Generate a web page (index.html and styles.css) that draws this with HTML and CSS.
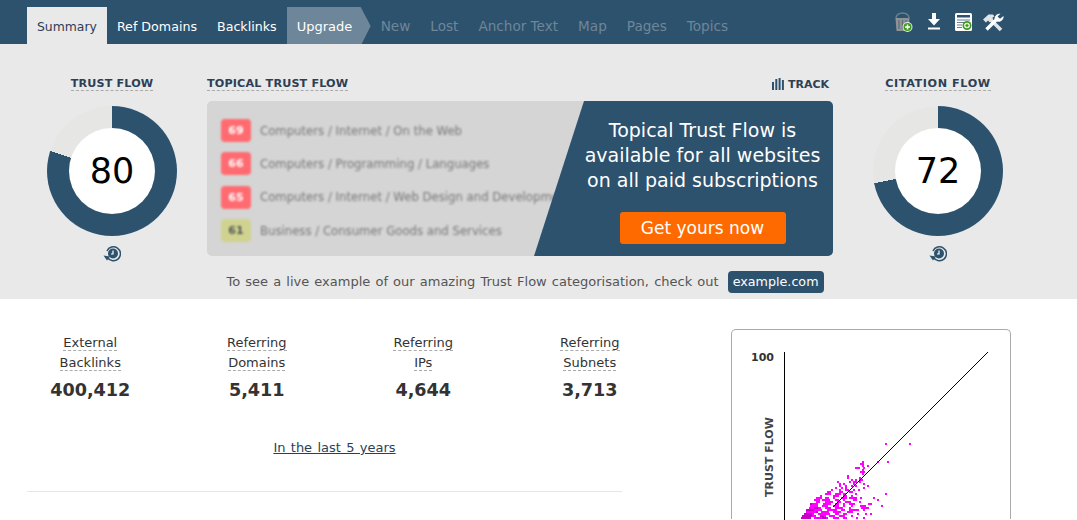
FILE: index.html
```html
<!DOCTYPE html>
<html lang="en">
<head>
    <meta charset="UTF-8">
    <meta name="viewport" content="width=device-width, initial-scale=1.0">
    <title>Site Explorer Summary</title>
    <link rel="stylesheet" href="styles.css">
</head>
<body>
<nav class="topbar">
    <ul class="tabs">
        <li class="tab active">Summary</li>
        <li class="tab">Ref Domains</li>
        <li class="tab">Backlinks</li>
        <li class="tab upgrade">Upgrade</li>
        <li class="tab off">New</li>
        <li class="tab off">Lost</li>
        <li class="tab off">Anchor Text</li>
        <li class="tab off">Map</li>
        <li class="tab off">Pages</li>
        <li class="tab off">Topics</li>
    </ul>
    <div class="tools">
        <!-- bucket -->
        <svg width="19" height="21" viewBox="0 0 19 21">
            <path d="M2 6a6.500 5 0 0 1 13 0" fill="none" stroke="#6f7f8b" stroke-width="1.500"/>
            <path d="M1.500 6h14l-1 13h-12z" fill="#8d9499"/>
            <path d="M5 8v9M8.500 8v9M12 8v9" stroke="#5f6a72" stroke-width="1.200"/>
            <circle cx="13.500" cy="15" r="5" fill="#e8efe6"/>
            <circle cx="13.500" cy="15" r="4" fill="#3f9a1f"/>
            <path d="M13.500 12.500v5M11 15h5" stroke="#fff" stroke-width="1.500"/>
        </svg>
        <!-- download -->
        <svg width="14" height="18" viewBox="0 0 14 18">
            <path d="M5 0h4v6h4l-6 6.500L1 6h4z" fill="#fff"/>
            <path d="M1 15.500h12" stroke="#fff" stroke-width="2"/>
        </svg>
        <!-- report -->
        <svg width="18" height="18" viewBox="0 0 18 18">
            <rect width="17" height="18" rx="1.500" fill="#fff"/>
            <rect x="2" y="2" width="13" height="2.500" fill="#2d526e"/>
            <path d="M2 7h13M2 9.500h7M2 12h5M2 14.500h5" stroke="#6b7f8e" stroke-width="1.200"/>
            <circle cx="12" cy="12.500" r="4.500" fill="#3f9a1f"/>
            <circle cx="12" cy="12.500" r="2.800" fill="#fff"/>
            <path d="M12 10.800v3.400M10.300 12.500h3.400" stroke="#3f9a1f" stroke-width="1.400"/>
        </svg>
        <!-- tools -->
        <svg class="tool-last" width="21" height="19" viewBox="0 0 21 19">
            <path d="M7 6l11 11" stroke="#dfe4e7" stroke-width="3.600" fill="none"/>
            <path d="M0 6.500 5.500 1.500h4.500l1.500 2-2 1 .5 2-3 3-2-2-2 2z" fill="#dfe4e7"/>
            <path d="M15 5L3.500 16.500" stroke="#fff" stroke-width="3.400" fill="none"/>
            <path d="M20.500 3a5 5 0 0 1-6.500 5.500L11.500 6A5 5 0 0 1 17.500.8l-3 2.700 2.500 2.300z" fill="#fff"/>
        </svg>
    </div>
</nav>

<section class="band">
    <div class="gauge-col">
        <h2 class="heading"><span class="dashed">TRUST FLOW</span></h2>
        <div class="gauge g80"><div class="gauge-hole">80</div></div>
        <svg class="history" width="18" height="18" viewBox="0 0 18 18">
            <path d="M3.500 12.500A7 7 0 1 0 3 6" fill="none" stroke="#2d526e" stroke-width="1.500" transform="translate(1 0)"/>
            <path d="M.5 10.500l3.500 5 3-4z" fill="#2d526e"/>
            <circle cx="10" cy="8.500" r="5" fill="#2d526e"/>
            <path d="M10 5.500v3.500h-2" fill="none" stroke="#fff" stroke-width="1.200"/>
        </svg>
    </div>

    <div class="topical">
        <div class="topical-head">
            <h2 class="heading"><span class="dashed">TOPICAL TRUST FLOW</span></h2>
            <a class="track">
                <svg width="12" height="12" viewBox="0 0 12 12">
                    <path d="M0 4h2v8H0zM3.300 1h2v11h-2zM6.600 0h2v12h-2zM9.900 2h2v10h-2z" fill="#2d526e"/>
                </svg>
                TRACK
            </a>
        </div>
        <div class="panel">
            <ul class="topics">
                <li class="topic"><b class="score red">69</b><span class="topic-name">Computers / Internet / On the Web</span></li>
                <li class="topic"><b class="score red">66</b><span class="topic-name">Computers / Programming / Languages</span></li>
                <li class="topic"><b class="score red">65</b><span class="topic-name">Computers / Internet / Web Design and Development</span></li>
                <li class="topic"><b class="score olive">61</b><span class="topic-name">Business / Consumer Goods and Services</span></li>
            </ul>
            <div class="promo">
                <p class="promo-text">Topical Trust Flow is<br>available for all websites<br>on all paid subscriptions</p>
                <a class="promo-btn">Get yours now</a>
            </div>
        </div>
        <p class="note">To see a live example of our amazing Trust Flow categorisation, check out <a class="example">example.com</a></p>
    </div>

    <div class="gauge-col">
        <h2 class="heading wide"><span class="dashed">CITATION FLOW</span></h2>
        <div class="gauge g72"><div class="gauge-hole">72</div></div>
        <svg class="history" width="18" height="18" viewBox="0 0 18 18">
            <path d="M3.500 12.500A7 7 0 1 0 3 6" fill="none" stroke="#2d526e" stroke-width="1.500" transform="translate(1 0)"/>
            <path d="M.5 10.500l3.500 5 3-4z" fill="#2d526e"/>
            <circle cx="10" cy="8.500" r="5" fill="#2d526e"/>
            <path d="M10 5.500v3.500h-2" fill="none" stroke="#fff" stroke-width="1.200"/>
        </svg>
    </div>
</section>

<main class="lower">
    <div class="counts">
        <div class="stats">
            <div class="stat">
                <div class="stat-label"><span class="dashed">External</span><br><span class="dashed">Backlinks</span></div>
                <div class="stat-value">400,412</div>
            </div>
            <div class="stat">
                <div class="stat-label"><span class="dashed">Referring</span><br><span class="dashed">Domains</span></div>
                <div class="stat-value">5,411</div>
            </div>
            <div class="stat">
                <div class="stat-label"><span class="dashed">Referring</span><br><span class="dashed">IPs</span></div>
                <div class="stat-value">4,644</div>
            </div>
            <div class="stat">
                <div class="stat-label"><span class="dashed">Referring</span><br><span class="dashed">Subnets</span></div>
                <div class="stat-value">3,713</div>
            </div>
        </div>
        <p class="period"><a href="#">In the last 5 years</a></p>
        <hr class="rule">
    </div>

    <div class="chart-card">
        <svg class="chart" width="278" height="190" viewBox="732 330 278 190">
            <text class="chart-num" x="751" y="361">100</text>
            <text class="chart-axis" transform="translate(773 497) rotate(-90)">TRUST FLOW</text>
            <path d="M784.500 352V520" stroke="#000" stroke-width="1" shape-rendering="crispEdges"/>
            <path class="dots" d="M885 444h2M909 444h2
                M877 462h2M887 462h2M862 462h2
                M860 464h4
                M862 466h2M867 466h2
                M855 468h5M863 468h2
                M862 470h2
                M860 472h5
                M862 474h2
                M847 476h2
                M847 478h2M859 478h2
                M851 480h2M855 480h2M859 480h4
                M849 482h2M853 482h4M859 482h2M837 482h2
                M839 484h2M843 484h2M853 484h2M863 484h2
                M867 486h2M839 486h2M845 486h2M851 486h2M855 486h2
                M835 488h2M841 488h2M845 488h2M863 488h2
                M831 490h2M839 490h2M845 490h4M853 490h2M858 490h2
                M827 492h4M839 492h4M849 492h4
                M825 494h6M835 494h6M843 494h3M855 494h2M885 494h2
                M820 496h2M833 496h6M843 496h4M851 496h2
                M816 498h6M825 498h4M833 498h2M841 498h6M849 498h8M860 498h2M873 498h2
                M814 500h6M822 500h8M835 500h4M843 500h2M853 500h4M877 500h2
                M816 502h4M825 502h8M837 502h4M845 502h6M859 502h2
                M812 504h6M823 504h8M835 504h4M843 504h2M849 504h6M868 504h4
                M810 506h8M822 506h6M833 506h6M843 506h2M851 506h2M860 506h6M881 506h2
                M809 508h12M825 508h6M835 508h8M849 508h2M861 508h8
                M808 510h14M827 510h10M841 510h4M849 510h10M863 510h2
                M806 512h12M821 512h8M833 512h8M847 512h6
                M804 514h10M818 514h12M835 514h4M843 514h4M857 514h2M865 514h2M870 514h2
                M802 516h14M820 516h6M829 516h6M839 516h6M851 516h2
                M801 518h10M814 518h14M833 518h6M843 518h4M856 518h2M863 518h2"/>
            <path class="dots-dense" d="M810 504h2M806 510h8M804 514h8M802 516h10M801 518h10M814 508h4M816 512h2M820 516h4M822 518h4"/>
            <path d="M988 352L833 507" stroke="#000" stroke-width="1" fill="none"/>
        </svg>
    </div>
</main>
</body>
</html>
```

FILE: styles.css
```css
html, body {
    margin: 0;
    height: 520px;
    overflow: hidden;
}

body {
    font-family: "DejaVu Sans", Verdana, sans-serif;
    font-size: 13px;
    color: #333;
    background-color: #fff;
}

ul {
    list-style: none;
    margin: 0;
    padding: 0;
}

p {
    margin: 0;
}

/* top navigation */
.topbar {
    display: flex;
    justify-content: space-between;
    height: 44px;
    padding-left: 27px;
    background-color: #2d526e;
}

.tabs {
    display: flex;
    align-items: flex-end;
}

.tab {
    height: 37px;
    line-height: 39px;
    padding: 0 10px;
    font-size: 12.650px;
    color: #fff;
    box-sizing: border-box;
}

.tab.active {
    font-size: 12.400px;
    color: #2d3f55;
    background-color: #e9e9e9;
}

.tab.upgrade {
    width: 84px;
    font-size: 13px;
    background-color: #6d8699;
    clip-path: polygon(0 0, 74px 0, 84px 19px, 75px 100%, 0 100%);
}

.tab.off {
    font-size: 13.600px;
    color: #6f8699;
}

.tools {
    display: flex;
    align-items: center;
    gap: 14px;
    margin-right: 73px;
}

.tool-last {
    margin-left: -4px;
}

/* grey band with the flow gauges */
.band {
    display: grid;
    grid-template-columns: 170px 626px 190px;
    column-gap: 10px;
    height: 255px;
    padding-left: 27px;
    background-color: #e9e9e9;
}

.heading {
    margin: 0;
    font-size: 11.200px;
    font-weight: bold;
    line-height: 16px;
    letter-spacing: .15px;
    color: #2d3f55;
}

.heading.wide {
    letter-spacing: .6px;
}

.dashed {
    border-bottom: 1px dashed #aaa;
}

.gauge-col {
    display: flex;
    flex-direction: column;
    align-items: center;
    padding-top: 32px;
}

.gauge {
    display: flex;
    align-items: center;
    justify-content: center;
    width: 130px;
    height: 130px;
    margin-top: 14px;
    border-radius: 50%;
}

.g80 {
    background: conic-gradient(#2d526e 0 80%, #e6e6e4 0);
}

.g72 {
    background: conic-gradient(#2d526e 0 72%, #e6e6e4 0);
}

.gauge-hole {
    width: 86px;
    height: 86px;
    line-height: 86px;
    text-align: center;
    font-size: 35px;
    color: #000;
    background-color: #fff;
    border-radius: 50%;
}

.history {
    margin-top: 9px;
}

.topical {
    padding-top: 32px;
}

.topical-head {
    display: flex;
    justify-content: space-between;
    align-items: center;
}

.track {
    display: flex;
    align-items: center;
    gap: 4px;
    font-size: 11px;
    font-weight: bold;
    color: #2d3f55;
    margin-right: 4px;
}

.panel {
    position: relative;
    height: 155px;
    margin-top: 9px;
    overflow: hidden;
    background-color: #d5d5d5;
    border-radius: 5px;
}

.topics {
    display: flex;
    flex-direction: column;
    gap: 10.400px;
    padding: 18px 0 0 14px;
    filter: blur(1.200px);
}

.topic {
    display: flex;
    align-items: center;
    gap: 9px;
    white-space: nowrap;
}

.score {
    width: 30px;
    height: 23px;
    line-height: 23px;
    text-align: center;
    font-size: 11px;
    border-radius: 4px;
}

.score.red {
    color: #fff;
    background-color: #ff6b70;
}

.score.olive {
    color: #555;
    background-color: #cfd38f;
}

.topic-name {
    font-size: 11.700px;
    color: #777;
}

/* dark slanted block over the blurred list */
.promo {
    position: absolute;
    top: 0;
    right: 0;
    bottom: 0;
    width: 299px;
    box-sizing: border-box;
    padding: 17px 0 0 38px;
    text-align: center;
    color: #fff;
    background-color: #2d526e;
    clip-path: polygon(50px 0, 100% 0, 100% 100%, 0 100%);
}

.promo-text {
    font-size: 19px;
    line-height: 25px;
}

.promo-btn {
    display: inline-block;
    width: 166px;
    height: 32px;
    line-height: 33px;
    margin-top: 19px;
    font-size: 17px;
    color: #fff;
    background-color: #ff6a00;
    border-radius: 3px;
}

.note {
    margin-top: 15px;
    padding-left: 10px;
    text-align: center;
    word-spacing: 1px;
    color: #555;
    line-height: 22px;
}

.example {
    display: inline-block;
    margin-left: 4px;
    padding: 0 5px;
    font-size: 12.700px;
    word-spacing: 0;
    color: #fff;
    background-color: #2d526e;
    border-radius: 4px;
}

/* lower white area */
.lower {
    display: flex;
    padding-left: 27px;
}

.counts {
    width: 595px;
}

.stats {
    display: grid;
    grid-template-columns: repeat(4, 166.500px);
    margin: 34px 0 0 -20px;
}

.stat {
    text-align: center;
}

.stat-label {
    line-height: 20px;
}

.stat-value {
    margin-top: 6px;
    font-size: 17.600px;
    font-weight: bold;
    line-height: 22px;
}

.period {
    margin-top: 39px;
    padding-left: 20px;
    text-align: center;
    word-spacing: 1.200px;
}

.period a {
    color: #2d3f55;
}

.rule {
    margin: 36px 0 0;
    border: 0;
    border-top: 1px solid #e6e6e6;
}

.chart-card {
    width: 278px;
    height: 189px;
    margin: 30px 0 0 109px;
    background-color: #fff;
    border: 1px solid #aaa;
    border-bottom: 0;
    border-radius: 5px 5px 0 0;
}

.chart {
    display: block;
}

.chart-num {
    font-size: 11px;
    font-weight: bold;
    fill: #333;
}

.chart-axis {
    font-size: 11px;
    font-weight: bold;
    fill: #444;
}

.dots {
    fill: none;
    stroke: #f0f;
    stroke-width: 2;
    shape-rendering: crispEdges;
}

.dots-dense {
    fill: none;
    stroke: #c800c8;
    stroke-width: 2;
    shape-rendering: crispEdges;
}
```
